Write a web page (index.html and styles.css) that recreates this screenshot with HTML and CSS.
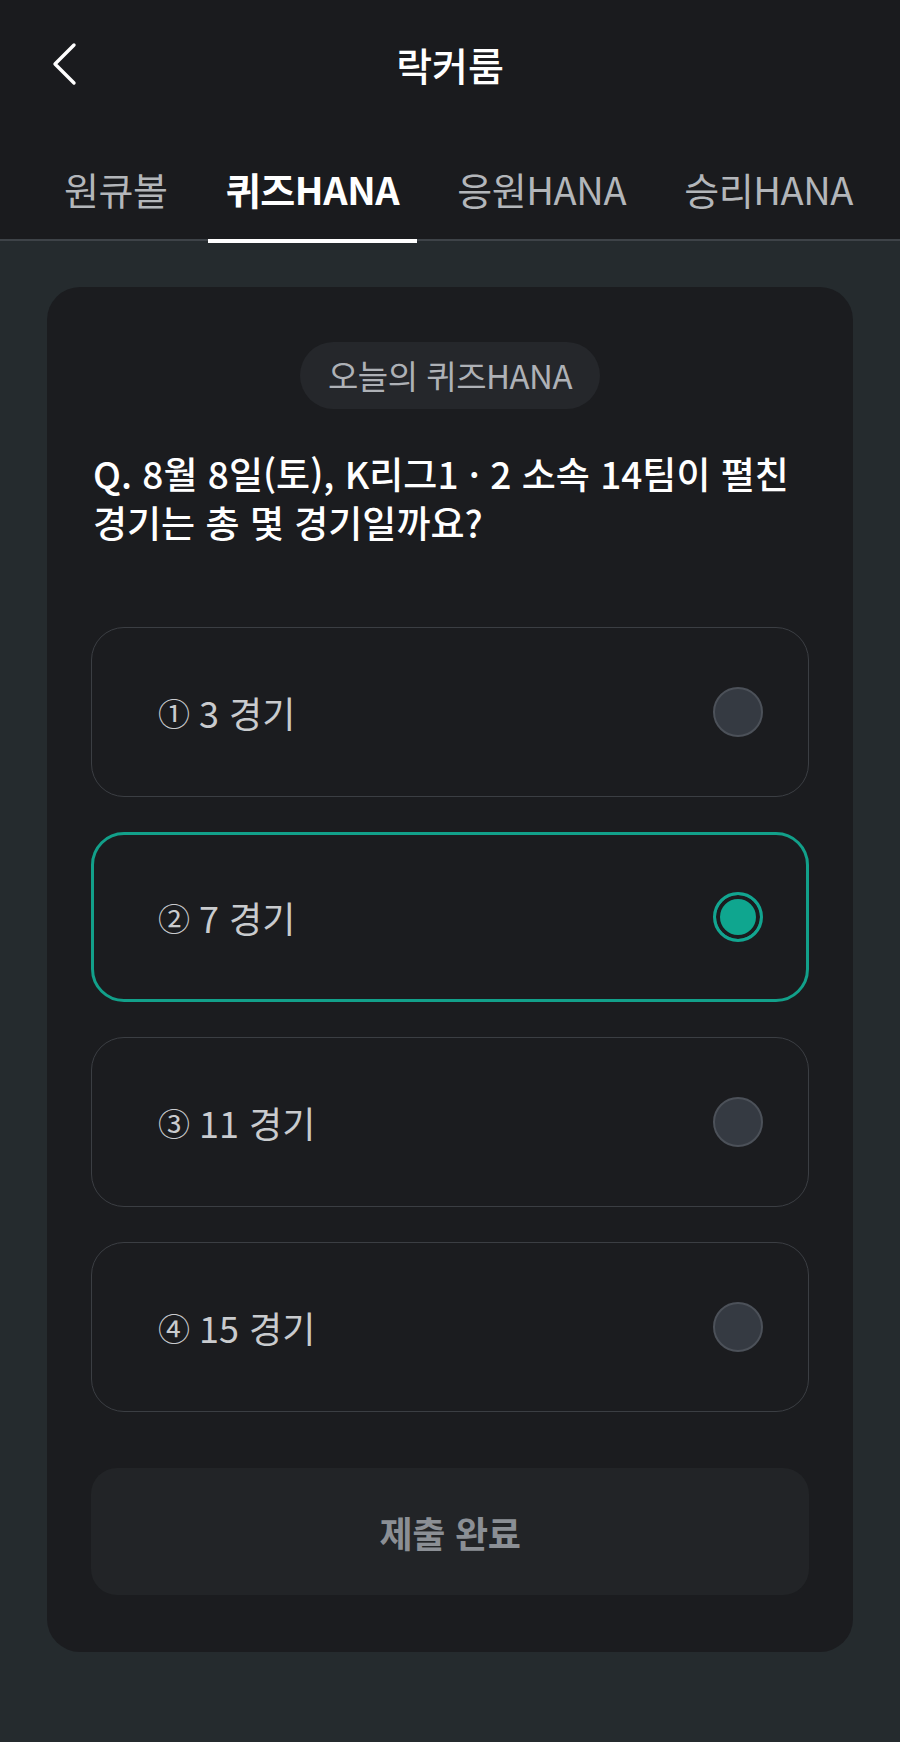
FILE: index.html
```html
<!DOCTYPE html>
<html lang="ko">
<head>
<meta charset="utf-8">
<link rel="stylesheet" href="styles.css">
</head>
<body>
<header class="header">
  <div class="topbar">
    <button class="back" aria-label="뒤로">
      <svg width="28" height="44" viewBox="0 0 28 44"><path d="M24 3 L5 22 L24 41" fill="none" stroke="#ffffff" stroke-width="3.4" stroke-linecap="round" stroke-linejoin="round"/></svg>
    </button>
    <h1 class="title">락커룸</h1>
  </div>
  <nav class="tabs">
    <a class="tab">원큐볼</a>
    <a class="tab active">퀴즈HANA</a>
    <a class="tab">응원HANA</a>
    <a class="tab">승리HANA</a>
  </nav>
</header>
<main class="main">
  <section class="card">
    <div class="pill-row"><span class="pill">오늘의 퀴즈HANA</span></div>
    <p class="question">Q. 8월 8일(토), K리그1 · 2 소속 14팀이 펼친<br>경기는 총 몇 경기일까요?</p>
    <ul class="options">
      <li class="option"><span class="opt-text"><span class="num">①</span> 3 경기</span><span class="radio"></span></li>
      <li class="option selected"><span class="opt-text"><span class="num">②</span> 7 경기</span><span class="radio"></span></li>
      <li class="option"><span class="opt-text"><span class="num">③</span> 11 경기</span><span class="radio"></span></li>
      <li class="option"><span class="opt-text"><span class="num">④</span> 15 경기</span><span class="radio"></span></li>
    </ul>
    <button class="submit">제출 완료</button>
  </section>
</main>
</body>
</html>
```
FILE: styles.css
```css
* { box-sizing: border-box; }
html, body { margin: 0; padding: 0; }
body {
  background: #252b2e;
  font-family: "Noto Sans CJK KR", "Noto Sans", sans-serif;
  color: #ffffff;
  width: 900px;
  min-height: 1742px;
}
.header {
  background: #1a1b1e;
}
.topbar {
  height: 128px;
  display: flex;
  align-items: center;
  justify-content: center;
  position: relative;
}
.back {
  position: absolute;
  left: 50px;
  top: 42px;
  background: none;
  border: 0;
  padding: 0;
  width: 28px;
  height: 44px;
}
.back svg { display: block; }
.title {
  margin: 0;
  font-size: 39px;
  font-weight: 500;
  line-height: 46px;
  color: #ffffff;
}
.tabs {
  display: flex;
  justify-content: space-between;
  padding: 0 29px 0 46px;
  height: 113px;
  border-bottom: 2px solid #3e4348;
}
.tab {
  display: block;
  padding: 37px 18px 0;
  height: 113px;
  font-size: 38px;
  line-height: 48px;
  color: #b3b6ba;
  font-weight: 400;
  letter-spacing: -0.4px;
}
.tab.active {
  color: #ffffff;
  font-weight: 700;
  border-bottom: 4px solid #ffffff;
  height: 115px;
}
.main {
  padding: 46px 47px 94px;
}
.card {
  background: #1b1c1f;
  border-radius: 33px;
  padding: 55px 44px 57px;
}
.pill-row {
  display: flex;
  justify-content: center;
}
.pill {
  display: inline-block;
  background: #25272b;
  color: #aeb1b6;
  font-size: 33px;
  line-height: 67px;
  height: 67px;
  padding: 0 28px;
  border-radius: 34px;
  letter-spacing: -0.5px;
}
.question {
  margin: 40px 0 0;
  padding-left: 2px;
  font-size: 37px;
  line-height: 49px;
  font-weight: 500;
  color: #ffffff;
  letter-spacing: 0;
}
.options {
  list-style: none;
  margin: 80px 0 0;
  padding: 0;
  display: flex;
  flex-direction: column;
  gap: 35px;
}
.option {
  height: 170px;
  border: 1.5px solid #3b3e43;
  border-radius: 33px;
  display: flex;
  align-items: center;
  justify-content: space-between;
  padding: 0 45px 0 66px;
}
.option.selected {
  border: 3px solid #12a08a;
  padding: 0 43px 0 64px;
}
.opt-text {
  font-size: 36px;
  color: #c9cbce;
  letter-spacing: 0;
  display: flex;
  align-items: center;
  gap: 9px;
}
.num {
  font-size: 32px;
}
.radio {
  width: 50px;
  height: 50px;
  border-radius: 50%;
  background: #353a42;
  border: 2px solid #4c5159;
}
.selected .radio {
  background: #0fa68f;
  border: 3px solid #12a590;
  box-shadow: inset 0 0 0 4px #1b1c1f;
}
.submit {
  display: block;
  width: 100%;
  margin-top: 56px;
  height: 127px;
  border: 0;
  border-radius: 26px;
  background: #222427;
  color: #8b8f95;
  font-family: "Noto Sans CJK KR", "Noto Sans", sans-serif;
  font-size: 36px;
  font-weight: 700;
  letter-spacing: -0.3px;
}
```
